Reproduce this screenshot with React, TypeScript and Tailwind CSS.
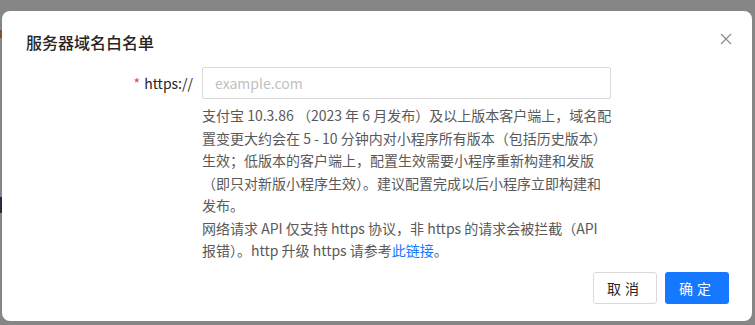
import React from 'react';

const font = { fontFamily: '"Noto Sans CJK SC", "Noto Sans", sans-serif' };

const helpLines = [
  '支付宝 10.3.86 （2023 年 6 月发布）及以上版本客户端上，域名配',
  '置变更大约会在 5 - 10 分钟内对小程序所有版本（包括历史版本）',
  '生效；低版本的客户端上，配置生效需要小程序重新构建和发版',
  '（即只对新版小程序生效）。建议配置完成以后小程序立即构建和',
  '发布。',
  '网络请求 API 仅支持 https 协议，非 https 的请求会被拦截（API',
];

export default function App() {
  return (
    <div
      className="relative h-[325px] w-[755px] overflow-hidden bg-[#868686] pl-[2px] pt-[11px]"
      style={font}
    >
      {/* bits of the page behind the mask */}
      <div className="absolute left-0 top-[30px] h-[8px] w-[2px] bg-[#8a4a3c]" />
      <div className="absolute left-0 top-[197px] h-[16px] w-[2px] bg-[#2a2a40]" />

      <div className="relative h-[310px] w-[750px] rounded-lg bg-white">
        <h2 className="px-6 pt-[20px] text-base font-medium leading-[22px] text-[#262626]">
          服务器域名白名单
        </h2>

        <button className="absolute right-[20px] top-[22px] flex h-3 w-3 items-center justify-center text-[#8c8c8c]">
          <svg viewBox="0 0 12 12" className="h-3 w-3" fill="none" stroke="currentColor" strokeWidth="1.2">
            <path d="M1 1l10 10M11 1L1 11" />
          </svg>
        </button>

        <div className="mt-[14px] flex">
          <div className="flex h-8 w-[191px] items-center justify-end text-sm text-[#262626]">
            <span className="mr-1 text-[#e5484d]">*</span>
            <span>https://</span>
          </div>
          <div className="ml-[9px] w-[409px]">
            <div className="flex h-8 items-center rounded-[2px] border border-[#d9d9d9] px-3 text-sm text-[#bfbfbf]">
              example.com
            </div>
            <div className="mt-[5px] text-sm leading-[22.5px] text-[#595959]">
              {helpLines.map((line) => (
                <div key={line} className="whitespace-nowrap">
                  {line}
                </div>
              ))}
              <div className="whitespace-nowrap">
                报错）。http 升级 https 请参考<a className="text-[#1677ff]">此链接</a>。
              </div>
            </div>
          </div>
        </div>

        <div className="mt-[10px] flex justify-end gap-2 pr-[23px]">
          <button className="h-8 w-16 rounded-[3px] border border-[#d9d9d9] bg-white text-sm tracking-[4px] text-[#262626]">
            取消
          </button>
          <button className="h-8 w-16 rounded-[3px] bg-[#1677ff] text-sm tracking-[4px] text-white">
            确定
          </button>
        </div>
      </div>
    </div>
  );
}
